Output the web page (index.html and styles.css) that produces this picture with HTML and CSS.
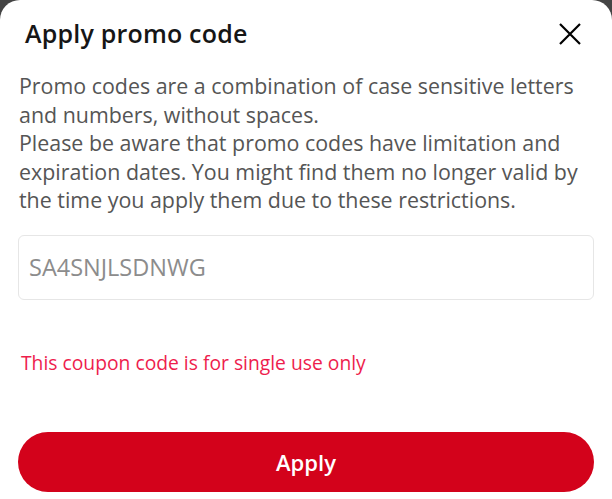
FILE: index.html
```html
<!DOCTYPE html>
<html>
<head>
<meta charset="utf-8">
<link rel="stylesheet" href="styles.css">
</head>
<body>
<div class="sheet">
  <div class="header">
    <h1 class="title">Apply promo code</h1>
    <button class="close" aria-label="Close">
      <svg width="22" height="22" viewBox="0 0 22 22"><path d="M1 1L21 21M21 1L1 21" stroke="#000" stroke-width="2.2" fill="none"/></svg>
    </button>
  </div>
  <p class="desc">Promo codes are a combination of case sensitive letters and numbers, without spaces.<br>Please be aware that promo codes have limitation and expiration dates. You might find them no longer valid by the time you apply them due to these restrictions.</p>
  <div class="field"><span class="placeholder">SA4SNJLSDNWG</span></div>
  <p class="error">This coupon code is for single use only</p>
  <button class="apply">Apply</button>
</div>
</body>
</html>
```
FILE: styles.css
```css
html, body {
  margin: 0;
  padding: 0;
  background: #444;
  width: 612px;
  height: 499px;
  overflow: hidden;
}
.sheet {
  background: #fff;
  border-radius: 20px 20px 0 0;
  height: 499px;
  box-sizing: border-box;
  padding: 0 18px;
  font-family: "Open Sans", "Liberation Sans", sans-serif;
  display: flex;
  flex-direction: column;
}
.header {
  display: flex;
  align-items: center;
  justify-content: space-between;
  height: 68px;
  padding-left: 7px;
}
.title {
  margin: 0 0 2px;
  font-size: 25px;
  font-weight: 600;
  letter-spacing: 0.2px;
  color: #161616;
}
.close {
  background: none;
  border: 0;
  padding: 0;
  margin-right: 13px;
  display: flex;
}
.desc {
  margin: 4px 0 0;
  font-size: 21.4px;
  line-height: 28.6px;
  color: #555;
  padding-left: 1px;
}
.field {
  margin-top: 20px;
  height: 65px;
  border: 1.5px solid #e6e6e6;
  border-radius: 6px;
  box-sizing: border-box;
  display: flex;
  align-items: center;
  padding-left: 10px;
}
.placeholder {
  font-size: 23.5px;
  color: #8c8c8c;
}
.error {
  margin: 49px 0 0 3px;
  font-size: 19.3px;
  color: #ee1d4d;
}
.apply {
  margin-top: 56px;
  height: 60px;
  border: 0;
  border-radius: 30px;
  background: #d3021b;
  color: #fff;
  font-family: "Open Sans", "Liberation Sans", sans-serif;
  font-size: 22px;
  font-weight: 600;
}
```
